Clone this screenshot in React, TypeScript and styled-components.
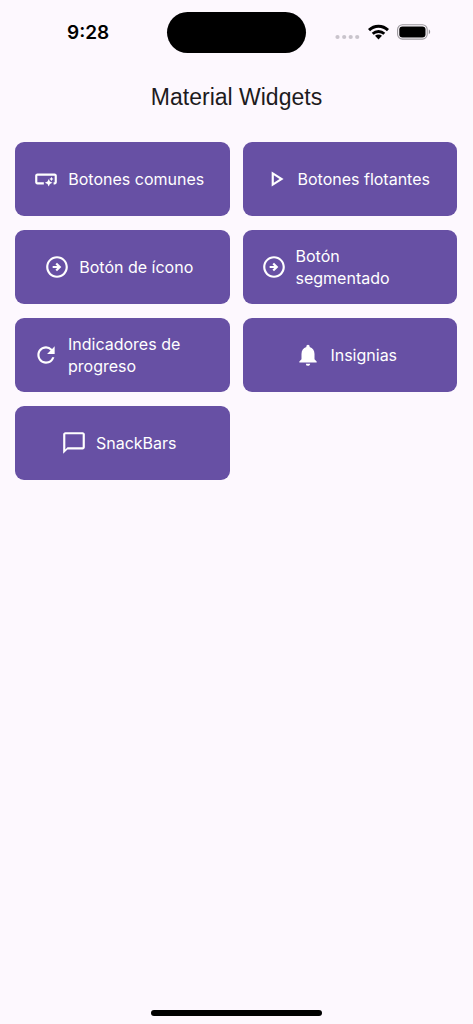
import React from "react";
import styled, { createGlobalStyle } from "styled-components";
import {
  MdOutlineSmartButton,
  MdOutlinePlayArrow,
  MdOutlineArrowCircleRight,
  MdRefresh,
  MdNotifications,
  MdChatBubbleOutline,
} from "react-icons/md";
import type { IconType } from "react-icons";

const GlobalStyle = createGlobalStyle`
  * { box-sizing: border-box; }
  body {
    margin: 0;
    background: #fdf8fe;
    color: #1d1b20;
    font-family: Inter, "Liberation Sans", sans-serif;
  }
`;

const Screen = styled.div`
  min-height: 100vh;
  display: flex;
  flex-direction: column;
`;

const StatusBar = styled.header`
  display: grid;
  grid-template-columns: 1fr 139px 1fr;
  align-items: center;
  padding-top: 12px;
  color: #000;
`;

const Clock = styled.time`
  padding-left: 67px;
  font-size: 19px;
  line-height: 24px;
  font-weight: 600;
`;

const Island = styled.div`
  height: 41px;
  border-radius: 21px;
  background: #000;
`;

const StatusIcons = styled.div`
  display: flex;
  align-items: center;
  justify-content: flex-end;
  gap: 8px;
  padding: 0 42px 2px 0;
`;

const AppBar = styled.div`
  display: flex;
  align-items: center;
  justify-content: center;
  height: 88px;
`;

const Title = styled.h1`
  margin: 0;
  font-family: "Liberation Sans", sans-serif;
  font-size: 23px;
  line-height: 28px;
  font-weight: 400;
`;

const Grid = styled.main`
  display: grid;
  grid-template-columns: repeat(2, minmax(0, 1fr));
  gap: 14px 13px;
  padding: 1px 16px 0 15px;
`;

const WidgetButton = styled.button`
  display: flex;
  align-items: center;
  justify-content: center;
  gap: 9px;
  height: 74px;
  padding: 0 25px 0 18px;
  border: 0;
  border-radius: 9px;
  background: #6750a4;
  color: #fff;
  font: 400 16px/22px Inter, "Liberation Sans", sans-serif;
  text-align: left;
  cursor: pointer;

  svg {
    flex: none;
  }
`;

const HomeArea = styled.footer`
  display: flex;
  justify-content: center;
  margin-top: auto;
  padding: 20px 0 8px;
`;

const HomeIndicator = styled.div`
  width: 36%;
  height: 6px;
  border-radius: 3px;
  background: #000;
`;

const widgets: { label: string; icon: IconType }[] = [
  { label: "Botones comunes", icon: MdOutlineSmartButton },
  { label: "Botones flotantes", icon: MdOutlinePlayArrow },
  { label: "Botón de ícono", icon: MdOutlineArrowCircleRight },
  { label: "Botón segmentado", icon: MdOutlineArrowCircleRight },
  { label: "Indicadores de progreso", icon: MdRefresh },
  { label: "Insignias", icon: MdNotifications },
  { label: "SnackBars", icon: MdChatBubbleOutline },
];

const SignalDots = () => (
  <svg width="25" height="16" viewBox="0 0 25 16" fill="#c9c4cc" aria-hidden="true">
    <circle cx="2.5" cy="13" r="2.1" />
    <circle cx="9.2" cy="13" r="2.1" />
    <circle cx="15.7" cy="13" r="2.1" />
    <circle cx="22.2" cy="13" r="2.1" />
  </svg>
);

const Wifi = () => (
  <svg width="21" height="16" viewBox="0 0 21 16" fill="none" stroke="#000" aria-hidden="true">
    <path d="M1 6.1C6.3 0.8 14.7 0.8 20 6.1" strokeWidth="3" />
    <path d="M4.7 9.8C8 6.7 13 6.7 16.3 9.8" strokeWidth="2.8" />
    <path d="M10.5 15.4L7 11.8C9 10.1 12 10.1 14 11.8Z" fill="#000" stroke="none" />
  </svg>
);

const Battery = () => (
  <svg width="34" height="16" viewBox="0 0 34 16" aria-hidden="true">
    <rect x="0.6" y="0.7" width="29.6" height="14.4" rx="4.8" fill="none" stroke="#9a979c" strokeWidth="1.1" />
    <rect x="2.3" y="2.4" width="26.2" height="11" rx="3.2" fill="#000" />
    <path d="M31.8 5.6c1.8.6 1.8 4 0 4.6z" fill="#8f8c92" />
  </svg>
);

export default function App() {
  return (
    <>
      <GlobalStyle />
      <Screen>
        <StatusBar>
          <Clock>9:28</Clock>
          <Island />
          <StatusIcons>
            <SignalDots />
            <Wifi />
            <Battery />
          </StatusIcons>
        </StatusBar>
        <AppBar>
          <Title>Material Widgets</Title>
        </AppBar>
        <Grid>
          {widgets.map(({ label, icon: Icon }) => (
            <WidgetButton key={label} type="button">
              <Icon size={26} aria-hidden="true" />
              <span>{label}</span>
            </WidgetButton>
          ))}
        </Grid>
        <HomeArea>
          <HomeIndicator />
        </HomeArea>
      </Screen>
    </>
  );
}
